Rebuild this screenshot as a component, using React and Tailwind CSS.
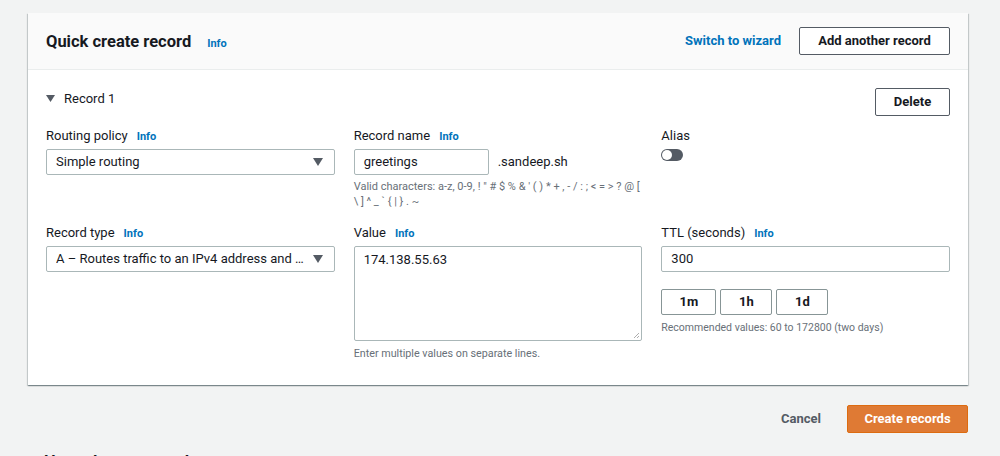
import React from "react";

const font = { fontFamily: 'Roboto, "Liberation Sans", sans-serif' };

function Info() {
  return <span className="text-[11px] font-bold text-[#0073bb] ml-[9px]">Info</span>;
}

function Label({ children, info = true }) {
  return (
    <div className="flex items-baseline h-[16px] leading-[16px] mb-[5px]">
      <span className="text-[13px] text-[#16191f]">{children}</span>
      {info && <Info />}
    </div>
  );
}

function Caret() {
  return (
    <svg width="10" height="8" viewBox="0 0 10 8" className="shrink-0">
      <path d="M0 0 H10 L5 8 Z" fill="#545b64" />
    </svg>
  );
}

function Select({ children }) {
  return (
    <div className="h-[26px] border border-[#aab7b8] rounded-[2px] bg-white flex items-center pl-[9px] pr-[11px] gap-[6px]">
      <span className="flex-1 truncate text-[13px] text-[#16191f]">{children}</span>
      <Caret />
    </div>
  );
}

function Btn({ children, className = "" }) {
  return (
    <div className={`h-[28px] border border-[#545b64] rounded-[2px] bg-white flex items-center justify-center text-[13px] font-bold text-[#16191f] ${className}`}>
      {children}
    </div>
  );
}

const validChars = "Valid characters: a-z, 0-9, ! \" # $ % & ' ( ) * + , - / : ; < = > ? @ [ \\ ] ^ _ ` { | } . ~";

export default function App() {
  return (
    <div className="w-[1000px] h-[456px] overflow-hidden bg-[#f2f3f3]" style={font}>
      <div className="pt-[13px] pl-[28px] pr-[32px]">
        <div className="bg-white shadow-[0_1px_1px_0_rgba(0,28,36,0.3),1px_1px_1px_0_rgba(0,28,36,0.15),-1px_1px_1px_0_rgba(0,28,36,0.15)]">
          <div className="h-[57px] bg-[#fafafa] border-b border-[#eaeded] flex items-center pl-[18px] pr-[18px]">
            <div className="flex items-baseline flex-1 mt-[2px]">
              <span className="text-[16.5px] font-bold text-[#16191f]">Quick create record</span>
              <span className="text-[11px] font-bold text-[#0073bb] ml-[16px]">Info</span>
            </div>
            <span className="text-[13px] font-bold text-[#0073bb] mr-[18px]">Switch to wizard</span>
            <Btn className="w-[151px]">Add another record</Btn>
          </div>
          <div className="pt-[18px] pb-[24px] px-[18px]">
            <div className="flex items-center justify-between h-[28px]">
              <div className="flex items-center gap-[9px] -mt-[7px]">
                <svg width="9" height="7" viewBox="0 0 9 7"><path d="M0 0 H9 L4.5 7 Z" fill="#545b64" /></svg>
                <span className="text-[13px] text-[#16191f]">Record 1</span>
              </div>
              <Btn className="w-[75px]">Delete</Btn>
            </div>
            <div className="grid grid-cols-3 gap-x-[19px] mt-[12px]">
              <div>
                <Label>Routing policy</Label>
                <Select>Simple routing</Select>
              </div>
              <div>
                <Label>Record name</Label>
                <div className="flex items-center">
                  <div className="w-[135px] h-[26px] border border-[#aab7b8] rounded-[2px] flex items-center pl-[9px] text-[13px] text-[#16191f]">greetings</div>
                  <span className="ml-[9px] text-[13px] text-[#16191f]">.sandeep.sh</span>
                </div>
                <div className="mt-[4px] text-[11px] leading-[15px] text-[#687078] pr-[2px]">{validChars}</div>
              </div>
              <div>
                <Label info={false}>Alias</Label>
                <div className="mt-[2px] w-[22px] h-[12px] rounded-full bg-[#545b64] relative">
                  <div className="absolute left-[1px] top-[1px] w-[10px] h-[10px] rounded-full bg-white" />
                </div>
              </div>
            </div>
            <div className="grid grid-cols-3 gap-x-[19px] mt-[16px]">
              <div>
                <Label>Record type</Label>
                <Select>A – Routes traffic to an IPv4 address and some AWS resources</Select>
              </div>
              <div>
                <Label>Value</Label>
                <div className="mt-[4px] h-[95px] border border-[#aab7b8] rounded-[2px] relative pl-[9px] pt-[3px] text-[13px] text-[#16191f]">
                  174.138.55.63
                  <svg width="7" height="7" viewBox="0 0 7 7" className="absolute right-[1px] bottom-[1px]">
                    <path d="M6 1 L1 6 M6 4 L4 6" stroke="#999" strokeWidth="0.8" />
                  </svg>
                </div>
                <div className="mt-[5px] text-[10.75px] leading-[15px] text-[#687078]">Enter multiple values on separate lines.</div>
              </div>
              <div>
                <Label>TTL (seconds)</Label>
                <div className="h-[26px] border border-[#aab7b8] rounded-[2px] flex items-center pl-[9px] text-[13px] text-[#16191f]">300</div>
                <div className="flex gap-[4px] mt-[17px]">
                  <div className="w-[55px] h-[26px] border border-[#879596] rounded-[2px] flex items-center justify-center text-[13px] font-bold text-[#16191f]">1m</div>
                  <div className="w-[52px] h-[26px] border border-[#879596] rounded-[2px] flex items-center justify-center text-[13px] font-bold text-[#16191f]">1h</div>
                  <div className="w-[52px] h-[26px] border border-[#879596] rounded-[2px] flex items-center justify-center text-[13px] font-bold text-[#16191f]">1d</div>
                </div>
                <div className="mt-[5px] text-[10.5px] leading-[15px] text-[#687078]">Recommended values: 60 to 172800 (two days)</div>
              </div>
            </div>
          </div>
        </div>
        <div className="flex justify-end items-center mt-[20px] gap-[26px]">
          <span className="text-[13px] font-bold text-[#545b64]">Cancel</span>
          <div className="w-[121px] h-[28px] bg-[#df7a34] border border-[#dd6b10] rounded-[2px] flex items-center justify-center text-[13px] font-bold text-white">Create records</div>
        </div>
        <div className="mt-[17px] pl-[16px] text-[16.5px] font-bold text-[#16191f]">Hosted zone records</div>
      </div>
    </div>
  );
}
